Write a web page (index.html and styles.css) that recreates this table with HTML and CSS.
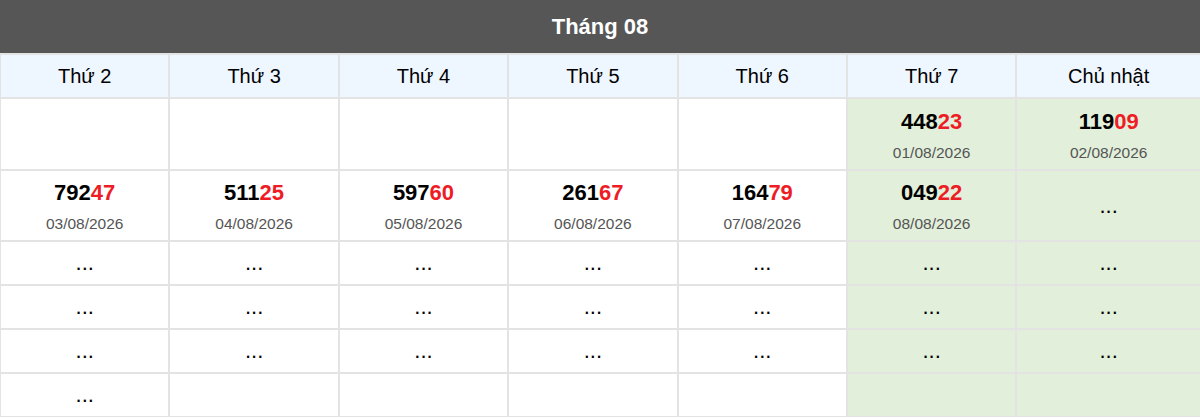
FILE: index.html
```html
<!DOCTYPE html>
<html lang="vi">
<head>
<meta charset="utf-8">
<title>Tháng 08</title>
<link rel="stylesheet" href="styles.css">
</head>
<body>
<div class="calendar">
  <div class="cal-title">Tháng 08</div>
  <div class="cal-grid">
    <div class="cell head">Thứ 2</div>
    <div class="cell head">Thứ 3</div>
    <div class="cell head">Thứ 4</div>
    <div class="cell head">Thứ 5</div>
    <div class="cell head">Thứ 6</div>
    <div class="cell head">Thứ 7</div>
    <div class="cell head last">Chủ nhật</div>

    <div class="cell"></div>
    <div class="cell"></div>
    <div class="cell"></div>
    <div class="cell"></div>
    <div class="cell"></div>
    <div class="cell we"><div class="num">448<span class="tail">23</span></div><div class="date">01/08/2026</div></div>
    <div class="cell we last"><div class="num">119<span class="tail">09</span></div><div class="date">02/08/2026</div></div>

    <div class="cell"><div class="num">792<span class="tail">47</span></div><div class="date">03/08/2026</div></div>
    <div class="cell"><div class="num">511<span class="tail">25</span></div><div class="date">04/08/2026</div></div>
    <div class="cell"><div class="num">597<span class="tail">60</span></div><div class="date">05/08/2026</div></div>
    <div class="cell"><div class="num">261<span class="tail">67</span></div><div class="date">06/08/2026</div></div>
    <div class="cell"><div class="num">164<span class="tail">79</span></div><div class="date">07/08/2026</div></div>
    <div class="cell we"><div class="num">049<span class="tail">22</span></div><div class="date">08/08/2026</div></div>
    <div class="cell we last"><span class="dots">...</span></div>

    <div class="cell"><span class="dots">...</span></div>
    <div class="cell"><span class="dots">...</span></div>
    <div class="cell"><span class="dots">...</span></div>
    <div class="cell"><span class="dots">...</span></div>
    <div class="cell"><span class="dots">...</span></div>
    <div class="cell we"><span class="dots">...</span></div>
    <div class="cell we last"><span class="dots">...</span></div>

    <div class="cell"><span class="dots">...</span></div>
    <div class="cell"><span class="dots">...</span></div>
    <div class="cell"><span class="dots">...</span></div>
    <div class="cell"><span class="dots">...</span></div>
    <div class="cell"><span class="dots">...</span></div>
    <div class="cell we"><span class="dots">...</span></div>
    <div class="cell we last"><span class="dots">...</span></div>

    <div class="cell"><span class="dots">...</span></div>
    <div class="cell"><span class="dots">...</span></div>
    <div class="cell"><span class="dots">...</span></div>
    <div class="cell"><span class="dots">...</span></div>
    <div class="cell"><span class="dots">...</span></div>
    <div class="cell we"><span class="dots">...</span></div>
    <div class="cell we last"><span class="dots">...</span></div>

    <div class="cell"><span class="dots">...</span></div>
    <div class="cell"></div>
    <div class="cell"></div>
    <div class="cell"></div>
    <div class="cell"></div>
    <div class="cell we"></div>
    <div class="cell we last"></div>
  </div>
</div>
</body>
</html>
```

FILE: styles.css
```css
html, body {
  margin: 0;
  padding: 0;
  background: #ffffff;
}

body {
  font-family: "Liberation Sans", Arial, sans-serif;
  color: #000000;
  overflow: hidden;
}

.calendar {
  width: 1200px;
}

.cal-title {
  height: 53px;
  background: #565656;
  color: #ffffff;
  font-size: 22px;
  font-weight: bold;
  display: flex;
  align-items: center;
  justify-content: center;
}

.cal-grid {
  display: grid;
  grid-template-columns: repeat(6, 169.4px) 1fr;
  grid-template-rows: 44px 72px 71px repeat(4, 44px);
  border-top: 1px solid #e3e3e3;
}

.cell {
  box-sizing: border-box;
  border: 1px solid #e3e3e3;
  background: #ffffff;
  display: flex;
  flex-direction: column;
  align-items: center;
  justify-content: center;
  text-align: center;
}

.cell.last {
  border-right: 0;
}

.cell.head {
  background: #eef6ff;
  font-size: 20px;
}

.cell.we {
  background: #e2efda;
}

.num {
  font-size: 22px;
  font-weight: bold;
  line-height: 28px;
  padding-top: 2px;
}

.tail {
  color: #ee1c25;
}

.date {
  margin-top: 7px;
  font-size: 15.5px;
  line-height: 20px;
  color: #555555;
}

.dots {
  font-size: 22px;
  line-height: 26px;
}
```
